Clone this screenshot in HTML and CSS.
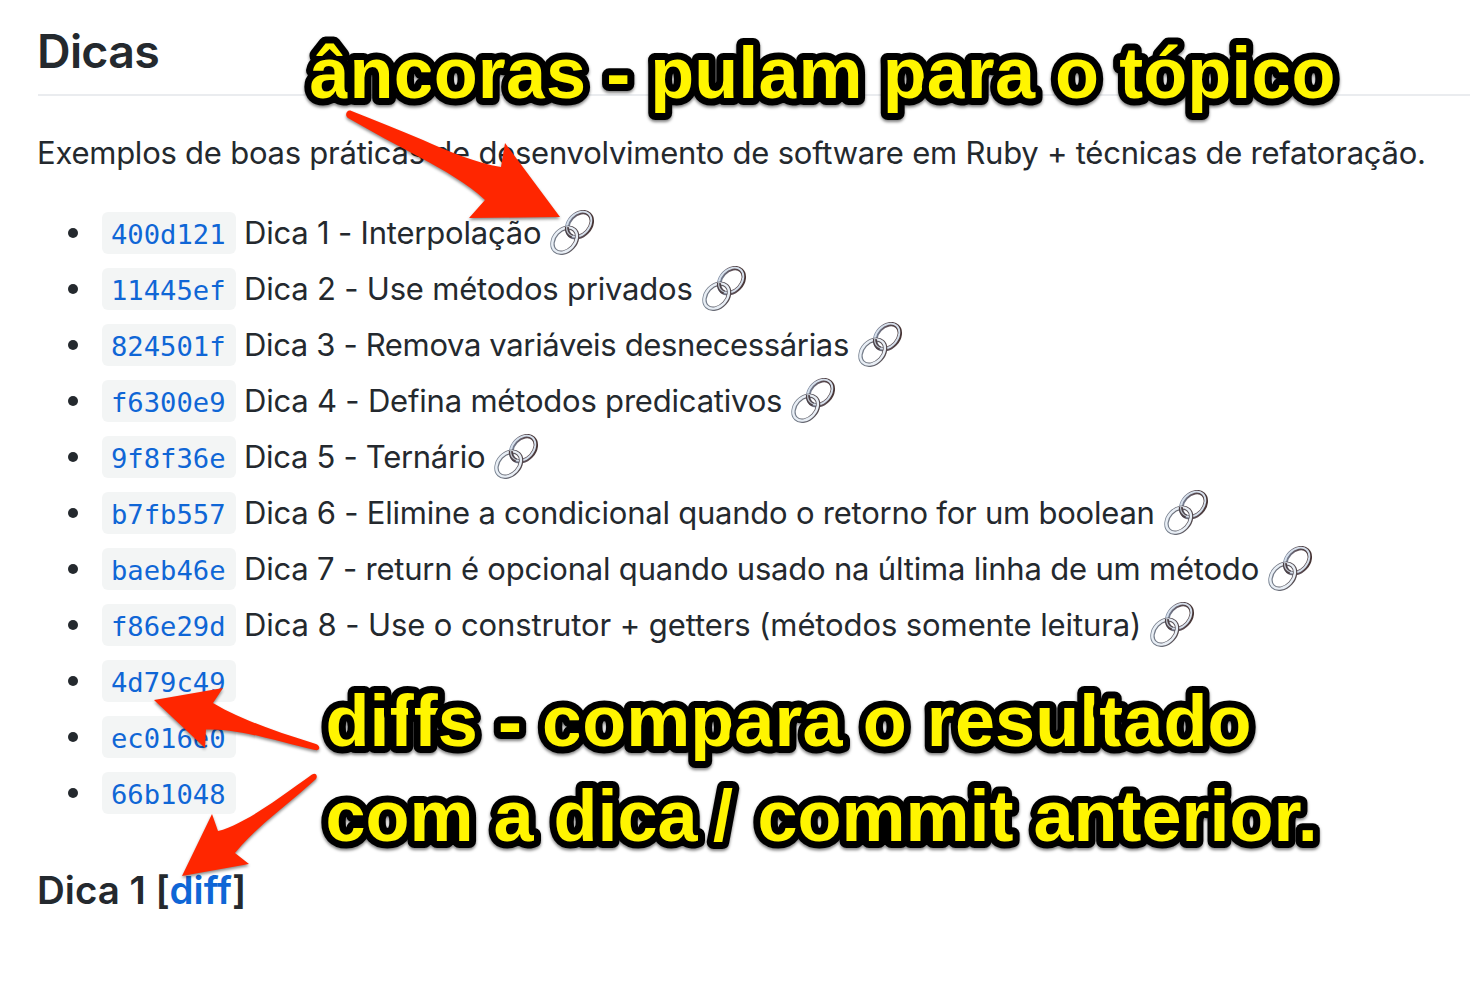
FILE: index.html
```
<!DOCTYPE html>
<html lang="pt">
<head>
<meta charset="utf-8">
<title>Dicas</title>
<link rel="stylesheet" href="styles.css">
</head>
<body>
<svg class="defs" aria-hidden="true">
  <defs>
    <linearGradient id="metal" gradientUnits="userSpaceOnUse" x1="18" y1="4" x2="40" y2="26">
      <stop offset="0" stop-color="#7f93ad"/>
      <stop offset=".5" stop-color="#5d5058"/>
      <stop offset="1" stop-color="#43302f"/>
    </linearGradient>
    <linearGradient id="steel" gradientUnits="userSpaceOnUse" x1="4" y1="20" x2="24" y2="42">
      <stop offset="0" stop-color="#7b8796"/>
      <stop offset="1" stop-color="#51464a"/>
    </linearGradient>
    <symbol id="link" viewBox="0 0 46 46">
      <g fill="none">
        <ellipse cx="29.500" cy="14.700" rx="14.200" ry="10.400" transform="rotate(-47 29.500 14.700)" stroke="url(#metal)" stroke-width="4.400"/>
        <ellipse cx="29" cy="14.200" rx="14.200" ry="10.400" transform="rotate(-47 29 14.200)" stroke="#d6e0ec" stroke-width="1.900"/>
        <ellipse cx="14.800" cy="30.200" rx="14.200" ry="10.400" transform="rotate(-47 14.800 30.200)" stroke="url(#steel)" stroke-width="4.400"/>
        <ellipse cx="14.600" cy="30" rx="14.200" ry="10.400" transform="rotate(-47 14.600 30)" stroke="#e8eef5" stroke-width="2.400"/>
        <path d="M17 17C16.500 21 18.500 25 22 26.500" stroke="#4c4045" stroke-width="4.200"/>
        <path d="M16.600 16.500C16.300 20.500 18.300 24.300 22 26" stroke="#b9c0ca" stroke-width="1.200"/>
      </g>
    </symbol>
  </defs>
</svg>
<main class="readme">
  <h2 class="title">Dicas</h2>
  <p class="intro">Exemplos de boas práticas de desenvolvimento de software em Ruby + técnicas de refatoração.</p>
  <ul class="tips">
    <li class="tip"><code class="sha">400d121</code><span class="label">Dica 1 - Interpolação</span><svg class="icon"><use href="#link"/></svg></li>
    <li class="tip"><code class="sha">11445ef</code><span class="label">Dica 2 - Use métodos privados</span><svg class="icon"><use href="#link"/></svg></li>
    <li class="tip"><code class="sha">824501f</code><span class="label">Dica 3 - Remova variáveis desnecessárias</span><svg class="icon"><use href="#link"/></svg></li>
    <li class="tip"><code class="sha">f6300e9</code><span class="label">Dica 4 - Defina métodos predicativos</span><svg class="icon"><use href="#link"/></svg></li>
    <li class="tip"><code class="sha">9f8f36e</code><span class="label">Dica 5 - Ternário</span><svg class="icon"><use href="#link"/></svg></li>
    <li class="tip"><code class="sha">b7fb557</code><span class="label">Dica 6 - Elimine a condicional quando o retorno for um boolean</span><svg class="icon"><use href="#link"/></svg></li>
    <li class="tip"><code class="sha">baeb46e</code><span class="label">Dica 7 - return é opcional quando usado na última linha de um método</span><svg class="icon"><use href="#link"/></svg></li>
    <li class="tip"><code class="sha">f86e29d</code><span class="label">Dica 8 - Use o construtor + getters (métodos somente leitura)</span><svg class="icon"><use href="#link"/></svg></li>
    <li class="tip"><code class="sha">4d79c49</code></li>
    <li class="tip"><code class="sha">ec016e0</code></li>
    <li class="tip"><code class="sha">66b1048</code></li>
  </ul>
  <h3 class="subtitle">Dica 1 [<span class="diff">diff</span>]</h3>
</main>
<svg class="notes" width="1470" height="982" viewBox="0 0 1470 982">
  <g class="arrows">
    <path d="M351.500 111C376 121 400 130 423 140C450 152 476 163 501 167L505 143L560 217L469 218L485 200C467 183 443 170 421 158C397 145 372 132 348 118C344 115 347 109 351.500 111Z"/>
    <path d="M154 700L223 688L213 703C243 721 281 733 316 744C321 746 320 751 315 750C283 743 239 728 206 729.500L205 748Z"/>
    <path d="M182 876L212 814L218 831C245 824 282 796 312 774.500C316 772 318 776 316 779C289 804 259 824 235 853L249 864Z"/>
  </g>
  <g class="captions">
    <text x="309.500" y="98" textLength="1026" lengthAdjust="spacing">âncoras - pulam para o tópico</text>
    <text x="325.500" y="746" textLength="926" lengthAdjust="spacing">diffs - compara o resultado</text>
    <text x="325.500" y="841">com a dica</text>
    <text x="713" y="841">/</text>
    <text x="757.500" y="841">commit anterior.</text>
  </g>
</svg>
</body>
</html>
```
FILE: styles.css
```
body {
  margin: 0;
  background: #fff;
  color: #24292e;
  font-family: Inter, "Liberation Sans", sans-serif;
  overflow: hidden;
}
.defs {
  position: absolute;
  width: 0;
  height: 0;
}
.readme {
  padding: 21px 0 0 38px;
}
.title {
  margin: 0;
  padding-bottom: 13px;
  border-bottom: 2px solid #eaecef;
  font-size: 46.5px;
  font-weight: 600;
  line-height: 60px;
  letter-spacing: -0.7px;
  text-indent: -1px;
}
.intro {
  margin: 33px 0 32px -1px;
  font-size: 31px;
  line-height: 48px;
  letter-spacing: -0.24px;
  white-space: nowrap;
}
.tips {
  display: flex;
  flex-direction: column;
  gap: 8px;
  margin: 0;
  padding: 0 0 0 30px;
  list-style: none;
}
.tip {
  display: flex;
  align-items: center;
  height: 48px;
  font-size: 31px;
  line-height: 48px;
  white-space: nowrap;
}
.tip::before {
  content: "";
  width: 10px;
  height: 10px;
  margin-right: 24px;
  border-radius: 50%;
  background: #24292e;
}
.sha {
  box-sizing: border-box;
  width: 134px;
  height: 42px;
  padding-left: 9px;
  border-radius: 6px;
  background: #f3f5f5;
  color: #0f66d6;
  font: 27.2px/45px "DejaVu Sans Mono", monospace;
}
.label {
  margin-left: 8px;
  letter-spacing: -0.2px;
}
.tip:nth-child(3) .label { letter-spacing: -0.35px; }
.tip:nth-child(5) .label { letter-spacing: -0.3px; }
.tip:nth-child(6) .label { letter-spacing: -0.23px; }
.tip:nth-child(8) .label { letter-spacing: -0.1px; }
.icon {
  width: 46px;
  height: 46px;
  margin-left: 9px;
}
.subtitle {
  margin: 48px 0 0;
  font-size: 38.5px;
  font-weight: 600;
  line-height: 50px;
  text-indent: -1px;
}
.diff {
  color: #0f66d6;
}
.notes {
  position: absolute;
  top: 0;
  left: 0;
}
.arrows {
  fill: #ff2600;
  filter: drop-shadow(0 2px 1.5px rgba(0, 0, 0, 0.45));
}
.captions {
  fill: #fff500;
  stroke: #000;
  stroke-width: 14px;
  stroke-linejoin: round;
  paint-order: stroke;
  font: bold 72px "Liberation Sans", sans-serif;
  filter: drop-shadow(0 2px 1.5px rgba(0, 0, 0, 0.5));
}
```
